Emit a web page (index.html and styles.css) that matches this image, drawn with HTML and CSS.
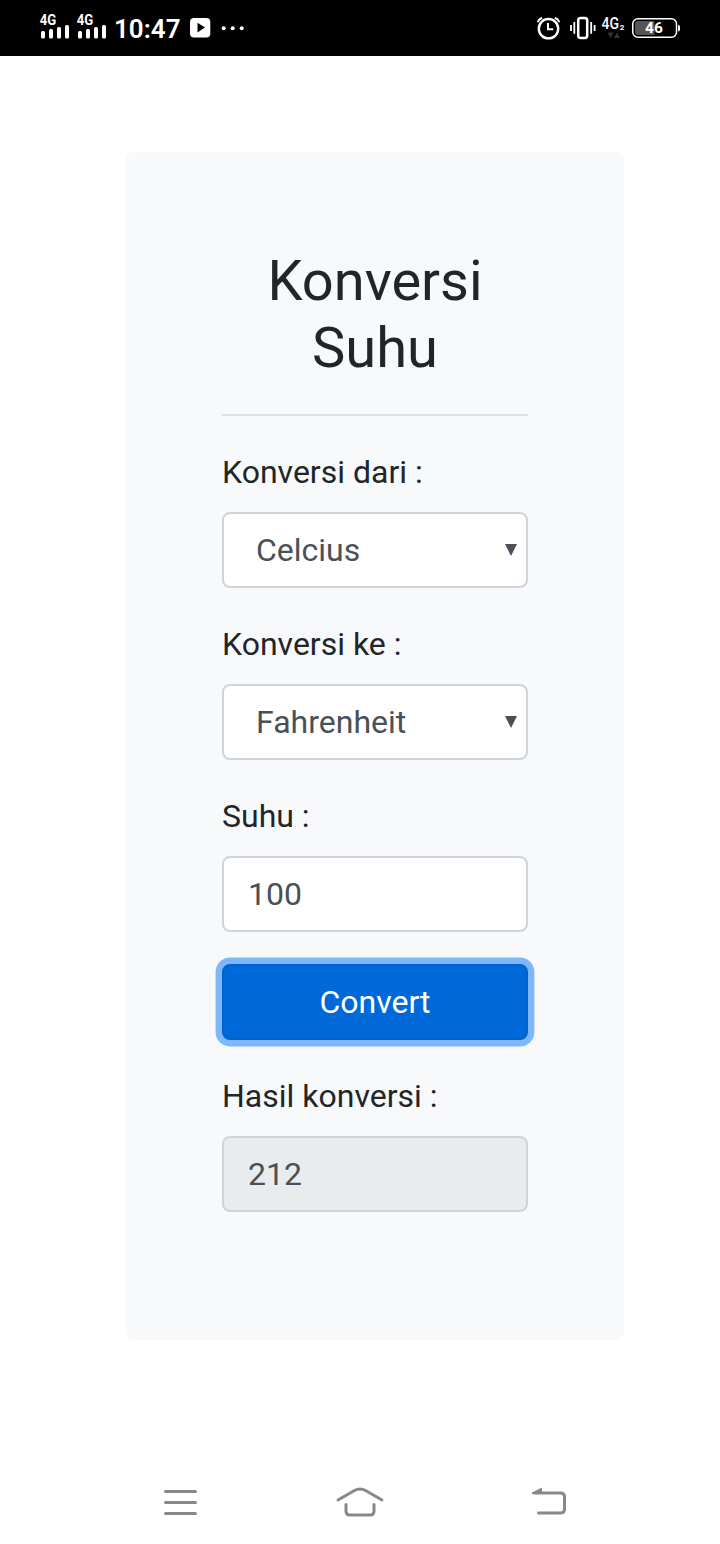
FILE: index.html
```html
<!DOCTYPE html>
<html lang="id">
<head>
<meta charset="utf-8">
<title>Konversi Suhu</title>
<link rel="stylesheet" href="styles.css">
</head>
<body>
<header class="status">
  <svg class="signal" width="30" height="56" viewBox="0 0 30 56"><text class="net" x="-.3" y="24.9" textLength="16.5" lengthAdjust="spacingAndGlyphs">4G</text><rect x="1" y="31" width="4" height="7.5" rx="1.5"/><rect x="9" y="29" width="4" height="9.5" rx="1.5"/><rect x="17" y="27" width="4" height="11.5" rx="1.5"/><rect x="25" y="25" width="4" height="13.5" rx="1.5"/></svg>
  <svg class="signal" width="30" height="56" viewBox="0 0 30 56"><text class="net" x="-.3" y="24.9" textLength="16.5" lengthAdjust="spacingAndGlyphs">4G</text><rect x="1" y="31" width="4" height="7.5" rx="1.5"/><rect x="9" y="29" width="4" height="9.5" rx="1.5"/><rect x="17" y="27" width="4" height="11.5" rx="1.5"/><rect x="25" y="25" width="4" height="13.5" rx="1.5"/></svg>
  <span class="time">10:47</span>
  <svg class="play" width="21" height="56" viewBox="0 0 21 56"><rect x="0" y="18" width="20.3" height="19.5" rx="4"/><path d="M7.5 22.8v9.6l7.5-4.8z" fill="#000"/></svg>
  <svg class="dots" width="24" height="56" viewBox="0 0 24 56"><circle cx="2.7" cy="28.3" r="2"/><circle cx="11.7" cy="28.3" r="2"/><circle cx="20.7" cy="28.3" r="2"/></svg>
  <div class="status-right">
    <svg width="24" height="56" viewBox="0 0 24 56" fill="none" stroke="#fff" stroke-width="2.4"><circle cx="11.5" cy="28.7" r="9.7"/><path d="M11 23v6.2h5.2" stroke-width="2"/><path d="M.7 22.2Q1.7 18.8 5.2 17.8M17.8 17.8Q21.3 18.8 22.3 22.2" stroke-width="1.8"/></svg>
    <svg class="vibrate" width="26" height="56" viewBox="0 0 26 56" fill="none" stroke="#fff"><rect x="8.2" y="18.1" width="9" height="19.8" rx="2.5" stroke-width="2.5"/><path d="M1 25v6M4.3 22v11.7M21.2 22v11.7M24.6 25v6" stroke-width="1.8"/></svg>
    <svg class="data" width="24" height="56" viewBox="0 0 24 56"><text class="net-data" x="-.5" y="29" textLength="17.5" lengthAdjust="spacingAndGlyphs">4G</text><text class="net-sub" x="17.7" y="29.5">2</text><path d="M5.5 32.5h6l-3 5.5zM12 38h6l-3-5.5z" fill="#333"/></svg>
    <svg class="battery" width="48" height="56" viewBox="0 0 48 56"><rect x=".8" y="18.8" width="43.7" height="18.4" rx="5" fill="none" stroke="#fff" stroke-width="1.5"/><path d="M6 21h16.5v14H6q-3 0-3-3v-8q0-3 3-3z" fill="#555"/><path d="M46 25q2 0 2 2v2.5q0 2-2 2z"/><text class="level" x="22" y="33.2" text-anchor="middle">46</text></svg>
  </div>
</header>
<main class="page">
  <form class="card">
    <h3 class="title">Konversi Suhu</h3>
    <hr class="rule">
    <div class="group">
      <label class="label" for="from">Konversi dari :</label>
      <div class="control select"><select class="field" id="from"><option>Celcius</option></select><svg class="arrow" width="12" height="12" viewBox="0 0 12 12"><path d="M0 0h12L6 12z"/></svg></div>
    </div>
    <div class="group">
      <label class="label" for="to">Konversi ke :</label>
      <div class="control select"><select class="field" id="to"><option>Fahrenheit</option></select><svg class="arrow" width="12" height="12" viewBox="0 0 12 12"><path d="M0 0h12L6 12z"/></svg></div>
    </div>
    <div class="group">
      <label class="label" for="value">Suhu :</label>
      <div class="control"><input class="field" id="value" value="100"></div>
    </div>
    <button class="convert" type="button">Convert</button>
    <div class="group">
      <label class="label" for="result">Hasil konversi :</label>
      <div class="control readonly"><input class="field" id="result" value="212" readonly></div>
    </div>
  </form>
</main>
<nav class="nav">
  <svg width="34" height="28" viewBox="0 0 34 28"><path d="M1.5 3.5h30M1.5 14.5h30M1.5 25.5h30"/></svg>
  <svg class="home" width="48" height="32" viewBox="0 0 48 32"><path d="M2 14 18.5 4.5Q24 1.5 29.5 4.5L46 14M10 18.5v6.5q0 4 4 4h20q4 0 4-4v-6.5"/></svg>
  <svg width="36" height="28" viewBox="0 0 36 28"><path d="M3 5h25.5q4 0 4 4v12q0 4-4 4H6.5"/><path class="tip" d="M0 6.2V4.5L10-.5v6z"/></svg>
</nav>
</body>
</html>
```
FILE: styles.css
```css
* { box-sizing: border-box; }
body {
  margin: 0;
  height: 1544px;
  display: flex;
  flex-direction: column;
  background: #fff;
  color: #212529;
  font: 32px/48px Roboto, sans-serif;
}
.status {
  height: 56px;
  padding: 0 40px;
  display: flex;
  align-items: center;
  background: #000;
  color: #fff;
  fill: #fff;
}
svg { display: block; flex: none; overflow: visible; }
.signal { margin-right: 7px; }
.net { font-size: 13.8px; font-weight: 700; }
.time {
  width: 76px;
  padding-top: 2px;
  font-size: 26px;
  font-weight: 600;
}
.dots { margin-left: 10px; }
.status-right { display: flex; margin-left: auto; }
.vibrate { margin-left: 9px; }
.data { margin-left: 6px; }
.net-data { font-size: 17px; font-weight: 500; }
.net-sub { font-size: 8px; font-weight: 700; }
.battery { margin-left: 6px; }
.level { font-size: 15.5px; font-weight: 700; }
.page { padding: 96px 96px 0 126px; flex: 1; }
.card {
  height: 1188px;
  padding: 96px;
  border-radius: 8px;
  background: #f8f9fb;
}
.title {
  margin: 0;
  font-size: 56px;
  font-weight: 400;
  line-height: 67.2px;
  text-align: center;
}
.rule {
  height: 2px;
  margin: 31.6px 0 32px;
  border: 0;
  background: #dedfe2;
}
.group { margin-bottom: 32px; }
.label { display: block; margin-bottom: 16px; }
.control {
  height: 76px;
  padding: 0 24px;
  display: flex;
  align-items: center;
  border: 2px solid #ced4da;
  border-radius: 8px;
  background: #fff;
}
.select { padding: 0 9px 0 32px; }
.readonly { background: #e9ecef; }
.field {
  flex: 1;
  min-width: 0;
  height: 48px;
  padding: 0;
  border: 0;
  outline: 0;
  appearance: none;
  background: transparent;
  color: #495057;
  font: inherit;
}
.arrow { fill: #495057; }
.convert {
  display: block;
  width: 100%;
  height: 76px;
  margin-bottom: 32px;
  padding: 0;
  border: 2px solid #0062cc;
  border-radius: 8px;
  background: #0069d9;
  box-shadow: 0 0 0 6.4px #7db8fc;
  color: #fff;
  font: inherit;
}
.nav {
  height: 84px;
  padding: 0 152px 0 164px;
  display: flex;
  align-items: center;
  fill: none;
  stroke: #888;
  stroke-width: 3;
  stroke-linecap: round;
}
.home { margin: 0 auto 0 138px; }
.tip { fill: #888; stroke: none; }
```
